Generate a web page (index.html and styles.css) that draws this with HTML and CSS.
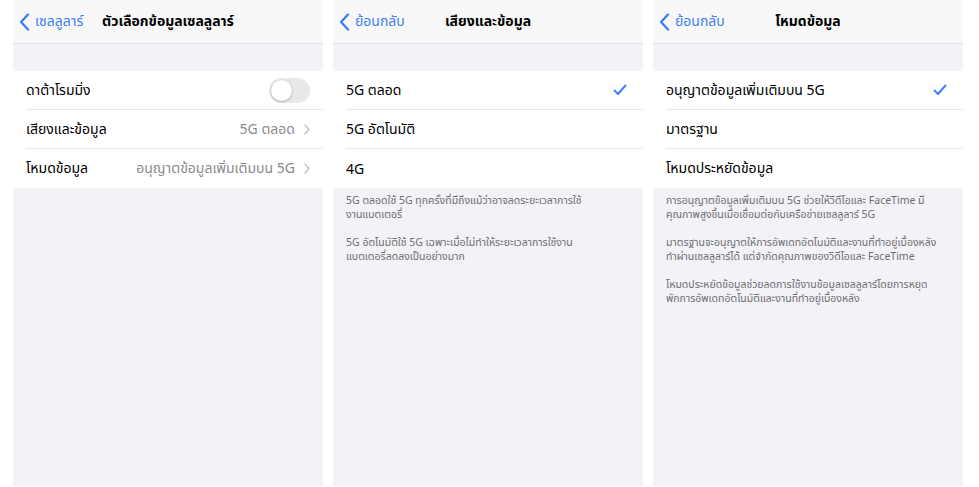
FILE: index.html
```html
<!DOCTYPE html>
<html lang="th">
<head>
<meta charset="utf-8">
<link rel="stylesheet" href="styles.css">
</head>
<body>
<div class="screens">
  <section class="screen">
    <header class="nav">
      <a class="back"><svg class="chev" viewBox="0 0 11 18" width="11" height="18"><path d="M9 1.5 L2 9 L9 16.5" fill="none" stroke="#3a7ff6" stroke-width="2.3" stroke-linecap="round" stroke-linejoin="round"/></svg>เซลลูลาร์</a>
      <h1 class="title">ตัวเลือกข้อมูลเซลลูลาร์</h1>
      <span></span>
    </header>
    <div class="spacer"></div>
    <ul class="group">
      <li class="row"><span class="label">ดาต้าโรมมิ่ง</span><span class="toggle"><span class="knob"></span></span></li>
      <li class="row"><span class="label">เสียงและข้อมูล</span><span class="value">5G ตลอด</span><svg class="disc" viewBox="0 0 6 11" width="6" height="11"><path d="M1 1 L5 5.5 L1 10" fill="none" stroke="#c4c4c7" stroke-width="1.4" stroke-linecap="round" stroke-linejoin="round"/></svg></li>
      <li class="row"><span class="label">โหมดข้อมูล</span><span class="value">อนุญาตข้อมูลเพิ่มเติมบน 5G</span><svg class="disc" viewBox="0 0 6 11" width="6" height="11"><path d="M1 1 L5 5.5 L1 10" fill="none" stroke="#c4c4c7" stroke-width="1.4" stroke-linecap="round" stroke-linejoin="round"/></svg></li>
    </ul>
  </section>

  <section class="screen">
    <header class="nav">
      <a class="back"><svg class="chev" viewBox="0 0 11 18" width="11" height="18"><path d="M9 1.5 L2 9 L9 16.5" fill="none" stroke="#3a7ff6" stroke-width="2.3" stroke-linecap="round" stroke-linejoin="round"/></svg>ย้อนกลับ</a>
      <h1 class="title">เสียงและข้อมูล</h1>
      <span></span>
    </header>
    <div class="spacer"></div>
    <ul class="group">
      <li class="row"><span class="label">5G ตลอด</span><svg class="check" viewBox="0 0 14 12" width="14" height="12"><path d="M1.5 6.5 L5 10 L12.5 1.5" fill="none" stroke="#3a7ff6" stroke-width="2" stroke-linecap="round" stroke-linejoin="round"/></svg></li>
      <li class="row"><span class="label">5G อัตโนมัติ</span></li>
      <li class="row"><span class="label">4G</span></li>
    </ul>
    <div class="footer">
      <p>5G ตลอดใช้ 5G ทุกครั้งที่มีถึงแม้ว่าอาจลดระยะเวลาการใช้<br>งานแบตเตอรี่</p>
      <p>5G อัตโนมัติใช้ 5G เฉพาะเมื่อไม่ทำให้ระยะเวลาการใช้งาน<br>แบตเตอรี่ลดลงเป็นอย่างมาก</p>
    </div>
  </section>

  <section class="screen">
    <header class="nav">
      <a class="back"><svg class="chev" viewBox="0 0 11 18" width="11" height="18"><path d="M9 1.5 L2 9 L9 16.5" fill="none" stroke="#3a7ff6" stroke-width="2.3" stroke-linecap="round" stroke-linejoin="round"/></svg>ย้อนกลับ</a>
      <h1 class="title">โหมดข้อมูล</h1>
      <span></span>
    </header>
    <div class="spacer"></div>
    <ul class="group">
      <li class="row"><span class="label">อนุญาตข้อมูลเพิ่มเติมบน 5G</span><svg class="check" viewBox="0 0 14 12" width="14" height="12"><path d="M1.5 6.5 L5 10 L12.5 1.5" fill="none" stroke="#3a7ff6" stroke-width="2" stroke-linecap="round" stroke-linejoin="round"/></svg></li>
      <li class="row"><span class="label">มาตรฐาน</span></li>
      <li class="row"><span class="label">โหมดประหยัดข้อมูล</span></li>
    </ul>
    <div class="footer">
      <p>การอนุญาตข้อมูลเพิ่มเติมบน 5G ช่วยให้วิดีโอและ FaceTime มี<br>คุณภาพสูงขึ้นเมื่อเชื่อมต่อกับเครือข่ายเซลลูลาร์ 5G</p>
      <p>มาตรฐานจะอนุญาตให้การอัพเดทอัตโนมัติและงานที่ทำอยู่เบื้องหลัง<br>ทำผ่านเซลลูลาร์ได้ แต่จำกัดคุณภาพของวิดีโอและ FaceTime</p>
      <p>โหมดประหยัดข้อมูลช่วยลดการใช้งานข้อมูลเซลลูลาร์โดยการหยุด<br>พักการอัพเดทอัตโนมัติและงานที่ทำอยู่เบื้องหลัง</p>
    </div>
  </section>
</div>
</body>
</html>
```

FILE: styles.css
```css
* { box-sizing: border-box; }
html, body { margin: 0; padding: 0; background: #ffffff; }
body {
  font-family: "Noto Sans", "Noto Sans Thai", "Noto Sans Thai UI", "DejaVu Sans", sans-serif;
  color: #000;
}
.screens {
  display: flex;
  gap: 10px;
  padding-left: 13px;
  height: 487px;
}
.screen {
  width: 310px;
  height: 486px;
  background: #f2f2f7;
  display: flex;
  flex-direction: column;
}
.nav {
  height: 44px;
  background: #f8f8f8;
  border-bottom: 1px solid #dedee0;
  display: grid;
  grid-template-columns: 1fr auto 1fr;
  align-items: center;
}
.back {
  display: flex;
  align-items: center;
  gap: 5px;
  padding-left: 6px;
  color: #3a7ff6;
  font-size: 14px;
  white-space: nowrap;
}
.chev { display: block; }
.title {
  margin: 0;
  font-size: 14px;
  font-weight: 700;
  text-align: center;
  white-space: nowrap;
}
.spacer { height: 27px; }
.group {
  list-style: none;
  margin: 0;
  padding: 0 0 0 13px;
  background: #fff;
}
.row {
  height: 39px;
  display: flex;
  align-items: center;
  padding-right: 13px;
  border-bottom: 1px solid #e6e6ea;
  font-size: 14px;
}
.row:last-child { border-bottom: none; }
.label { flex: 1; white-space: nowrap; }
.value { color: #8a8a8e; white-space: nowrap; margin-right: 9px; }
.disc { display: block; }
.check { display: block; margin-right: 3px; }
.toggle {
  width: 41px;
  height: 25px;
  border-radius: 13px;
  background: #e9e9ea;
  padding: 2px;
  display: flex;
}
.knob {
  width: 21px;
  height: 21px;
  border-radius: 50%;
  background: #fff;
  box-shadow: 0 1px 3px rgba(0,0,0,0.22), 0 0 0 0.5px rgba(0,0,0,0.06);
}
.footer {
  padding: 5px 6px 0 13px;
  font-size: 10.5px;
  line-height: 14px;
  color: #6d6d72;
}
.footer p { margin: 0 0 14px; }
```
